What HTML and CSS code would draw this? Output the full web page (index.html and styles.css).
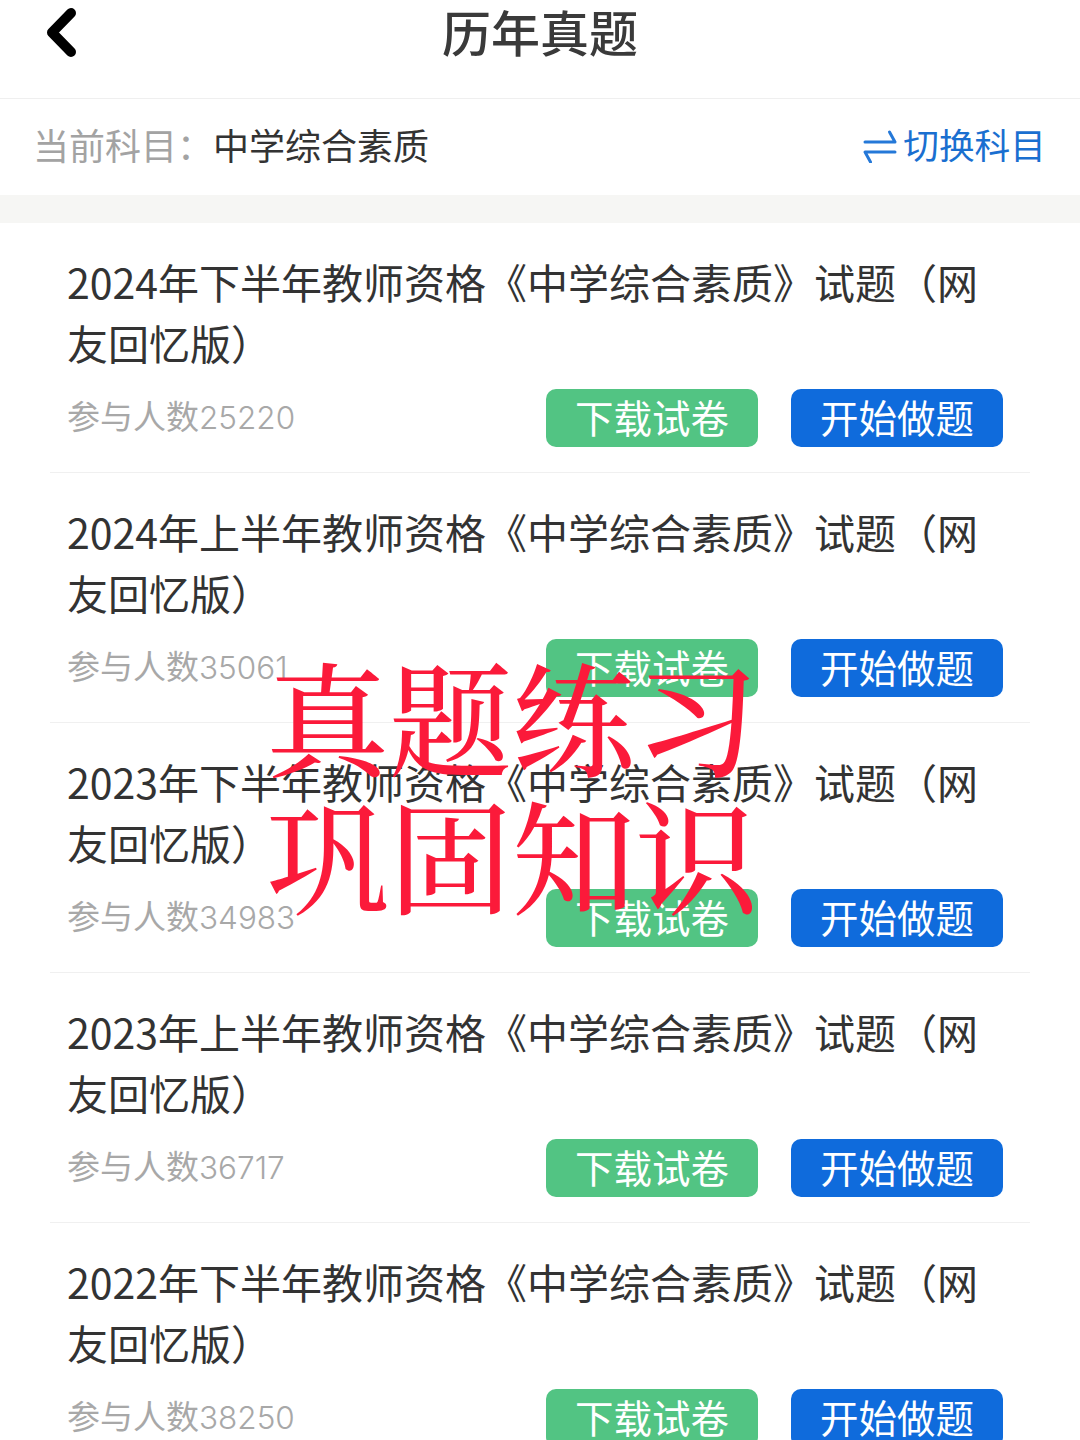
FILE: index.html
```html
<!DOCTYPE html>
<html lang="zh-CN">
<head>
<meta charset="utf-8">
<title>历年真题</title>
<link rel="stylesheet" href="styles.css">
</head>
<body>
<div class="page">
  <header class="topbar">
    <svg class="back" width="40" height="50" viewBox="40 8 40 50" aria-hidden="true"><path d="M69 13 L50 32.5 L69 52" /></svg>
    <h1 class="page-title">历年真题</h1>
  </header>
  <section class="subject">
    <div class="subject-current"><span class="subject-label">当前科目：</span><span class="subject-name">中学综合素质</span></div>
    <div class="switch">
      <svg class="swap" width="34" height="34" viewBox="0 0 34 34" aria-hidden="true"><path d="M2 13 H32 L26.5 3" /><path d="M32 23 H2 L7.5 33" /></svg>
      <span>切换科目</span>
    </div>
  </section>
  <div class="gap"></div>
  <main class="list">
    <article class="item">
      <h2 class="item-title">2024年下半年教师资格《中学综合素质》试题（网友回忆版）</h2>
      <div class="item-foot"><span class="count">参与人数<span class="num">25220</span></span><div class="actions"><a class="btn btn-green">下载试卷</a><a class="btn btn-blue">开始做题</a></div></div>
    </article>
    <article class="item">
      <h2 class="item-title">2024年上半年教师资格《中学综合素质》试题（网友回忆版）</h2>
      <div class="item-foot"><span class="count">参与人数<span class="num">35061</span></span><div class="actions"><a class="btn btn-green">下载试卷</a><a class="btn btn-blue">开始做题</a></div></div>
    </article>
    <article class="item">
      <h2 class="item-title">2023年下半年教师资格《中学综合素质》试题（网友回忆版）</h2>
      <div class="item-foot"><span class="count">参与人数<span class="num">34983</span></span><div class="actions"><a class="btn btn-green">下载试卷</a><a class="btn btn-blue">开始做题</a></div></div>
    </article>
    <article class="item">
      <h2 class="item-title">2023年上半年教师资格《中学综合素质》试题（网友回忆版）</h2>
      <div class="item-foot"><span class="count">参与人数<span class="num">36717</span></span><div class="actions"><a class="btn btn-green">下载试卷</a><a class="btn btn-blue">开始做题</a></div></div>
    </article>
    <article class="item">
      <h2 class="item-title">2022年下半年教师资格《中学综合素质》试题（网友回忆版）</h2>
      <div class="item-foot"><span class="count">参与人数<span class="num">38250</span></span><div class="actions"><a class="btn btn-green">下载试卷</a><a class="btn btn-blue">开始做题</a></div></div>
    </article>
  </main>
  <div class="stamp">真题练习<br>巩固知识</div>
</div>
</body>
</html>
```
FILE: styles.css
```css
* { box-sizing: border-box; }
html, body { margin: 0; padding: 0; background: #fff; }
body { font-family: "Noto Sans CJK SC", "Noto Sans", sans-serif; color: #333; }
.page { position: relative; width: 1080px; height: 1440px; overflow: hidden; background: #fff; }

.topbar { display: flex; align-items: flex-start; height: 99px; border-bottom: 1px solid #efefef; position: relative; justify-content: center; }
.back { position: absolute; left: 42px; top: 8px; fill: none; stroke: #000; stroke-width: 10; stroke-linecap: round; stroke-linejoin: round; }
.page-title { margin: 0; font-size: 49px; font-weight: 500; line-height: 61px; color: #3a3a3a; }

.subject { display: flex; align-items: center; justify-content: space-between; height: 96px; padding: 0 34px 6px 33px; }
.subject-current { font-size: 36px; line-height: 50px; }
.subject-label { color: #a3a3a3; }
.subject-name { color: #333; }
.switch { display: flex; align-items: center; gap: 6px; color: #1a6fd0; font-size: 35.7px; line-height: 50px; }
.swap { fill: none; stroke: #2478d8; stroke-width: 3; stroke-linecap: round; stroke-linejoin: round; position: relative; top: 2px; }

.gap { height: 28px; background: #f6f6f4; }

.list { padding: 0 50px; }
.item { height: 250px; padding: 28px 27px 0 17px; border-bottom: 1px solid #f0f0f0; }
.item-title { margin: 0; font-size: 41px; font-weight: 400; line-height: 61px; color: #333; }
.item-foot { display: flex; align-items: flex-start; justify-content: space-between; margin-top: 16px; }
.count { font-size: 33px; line-height: 52px; color: #a8a8a8; }
.num { font-family: "Inter", "Noto Sans CJK SC", sans-serif; font-size: 31.5px; font-weight: 300; }
.actions { display: flex; gap: 33px; }
.btn { display: flex; align-items: center; justify-content: center; width: 212px; height: 58px; padding-bottom: 4px; border-radius: 10px; color: #fff; font-size: 38.5px; }
.btn-green { background: #52c483; }
.btn-blue { background: #0f6bdc; }

.stamp { position: absolute; left: 266px; top: 645px; width: 510px; font-family: "Noto Serif CJK SC", "Noto Sans CJK SC", serif; font-size: 123px; font-weight: 500; line-height: 138px; color: #fb1a3a; white-space: nowrap; }
```
